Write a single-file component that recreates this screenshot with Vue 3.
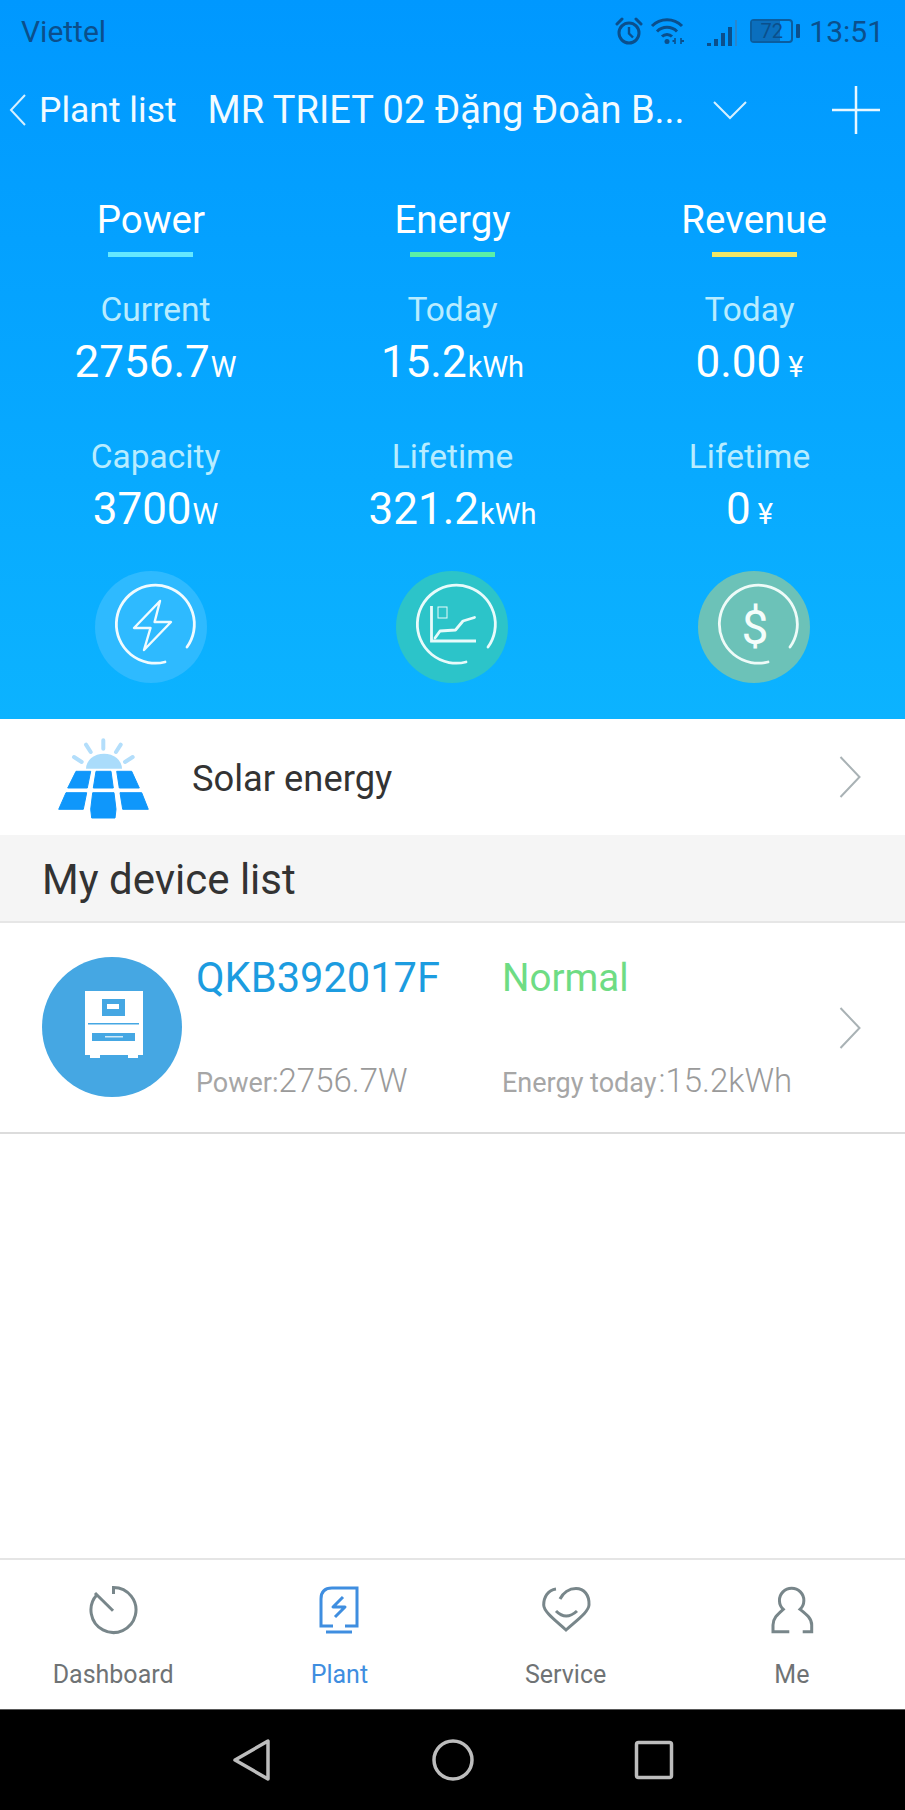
<template>
  <div class="screen">
    <section class="hero">
      <div class="status">
        <span class="carrier">Viettel</span>
        <div class="status-right">
          <svg class="ic-alarm" width="28" height="28" viewBox="0 0 28 28" fill="none" stroke="#0b4f8c" stroke-width="3">
            <circle cx="14" cy="16" r="10" />
            <path d="M14 10v6.5l4 4" stroke-width="2.4" />
            <path d="M2 7l5-5M26 7l-5-5" stroke-linecap="round" />
          </svg>
          <svg class="ic-wifi" width="36" height="30" viewBox="0 0 36 30" fill="none" stroke="#0b4f8c" stroke-width="3">
            <path d="M2 10A21 21 0 0 1 32 10" />
            <path d="M7 15.500A14 14 0 0 1 27 15.500" />
            <path d="M12 20.500A7 7 0 0 1 22 20.500" />
            <circle cx="17" cy="25.500" r="2.500" fill="#0b4f8c" stroke="none" />
            <path d="M25 22v6M31 22v6" stroke-width="1.600" />
            <path d="M22.500 25h2M31 25h3" stroke-width="2" />
          </svg>
          <div class="ic-signal">
            <i v-for="b in bars" :key="b.h" :class="{ pale: b.pale }" :style="{ height: b.h + 'px' }"></i>
          </div>
          <div class="battery">
            <div class="battery-box"><div class="battery-fill"></div><span>72</span></div>
            <div class="battery-nub"></div>
          </div>
          <span class="clock">13:51</span>
        </div>
      </div>

      <div class="topbar">
        <svg class="ic-back" width="18" height="34" viewBox="0 0 18 34" fill="none" stroke="#d6f0ff" stroke-width="2">
          <path d="M16 2L2 17l14 15" />
        </svg>
        <span class="back-label">Plant list</span>
        <span class="plant-name">MR TRIET 02 Đặng Đoàn B...</span>
        <svg class="ic-down" width="36" height="20" viewBox="0 0 36 20" fill="none" stroke="#d6f0ff" stroke-width="2">
          <path d="M2 2l16 16L34 2" />
        </svg>
        <svg class="ic-plus" width="48" height="48" viewBox="0 0 48 48" fill="none" stroke="#e8f7ff" stroke-width="2.500">
          <path d="M24 0v48M0 24h48" />
        </svg>
      </div>

      <div class="tabs">
        <div v-for="t in tabs" :key="t.label" class="tab">
          <span class="tab-label">{{ t.label }}</span>
          <i class="tab-line" :style="{ background: t.color }"></i>
        </div>
      </div>

      <div class="stats">
        <div v-for="s in stats" :key="s.id" class="stat">
          <div class="stat-label">{{ s.label }}</div>
          <div class="stat-value">{{ s.value }}<small :class="{ yen: s.unit === '¥' }">{{ s.unit }}</small></div>
        </div>
      </div>

      <div class="badges">
        <div class="badge badge-power">
          <svg width="112" height="112" viewBox="0 0 112 112" fill="none" stroke="#f0fbff" stroke-width="2.800">
            <path d="M92 76A39 39 0 1 0 70 91" stroke-linecap="round" />
            <path d="M65 30L39 57h16.500L49 79l27-28H59.600z" stroke-linejoin="round" stroke-width="2.400" />
          </svg>
        </div>
        <div class="badge badge-energy">
          <svg width="112" height="112" viewBox="0 0 112 112" fill="none" stroke="#e8fbfb" stroke-width="2.800">
            <path d="M92 76A39 39 0 1 0 70 91" stroke-linecap="round" />
            <path d="M35.500 35v35H80" />
            <path d="M39 67l5-7 15.500-1 7.500-9 11.500-3.500" stroke-linecap="round" stroke-linejoin="round" />
            <rect x="42" y="36" width="9" height="11" stroke-width="1" />
          </svg>
        </div>
        <div class="badge badge-revenue">
          <svg width="112" height="112" viewBox="0 0 112 112" fill="none" stroke="#eefbf8" stroke-width="2.800">
            <path d="M92 76A39 39 0 1 0 70 91" stroke-linecap="round" />
            <text x="57" y="73" text-anchor="middle" class="dollar">$</text>
          </svg>
        </div>
      </div>
    </section>

    <div class="solar-row">
      <svg class="ic-solar" width="100" height="90" viewBox="0 0 100 90">
        <g fill="none" stroke="#b3defb" stroke-width="4" stroke-linecap="round">
          <path d="M48.300 8.300v8.400M31 12.700l4.700 7.300M65.700 12.700L61 20M19 25l7.700 5M77.700 25L70 30" />
        </g>
        <path d="M31 36.700A18 15 0 0 1 67 36.700z" fill="#aadcfb" />
        <g fill="#0f97fb" stroke="#0f97fb" stroke-width="1" stroke-linejoin="round">
          <path d="M21 39.300h14.700L32.300 56H12.700z" />
          <path d="M41 39.300h15L58.300 56h-20z" />
          <path d="M61.700 39.300h15L84.300 56h-20z" />
          <path d="M11 60.700h20.700l-3.400 16.600H3.700z" />
          <path d="M37.700 60.700H59l2 16.600-1 8.700H36.700l-1-8.700z" />
          <path d="M65 60.700h21.700l6.600 16.600H67.700z" />
        </g>
      </svg>
      <span class="solar-label">Solar energy</span>
      <svg class="ic-chev" width="22" height="42" viewBox="0 0 22 42" fill="none" stroke="#a9b2b5" stroke-width="2">
        <path d="M1.500 1l19 20-19 20" />
      </svg>
    </div>

    <div class="section-title">My device list</div>

    <div class="device-row">
      <svg class="ic-device" width="140" height="140" viewBox="0 0 140 140">
        <circle cx="70" cy="70" r="70" fill="#45a7e3" />
        <rect x="43" y="34" width="58" height="64" fill="#fff" />
        <path d="M48 96h10v5H48zM86 96h10v5H86z" fill="#fff" />
        <rect x="60" y="42" width="23" height="17" fill="#45a7e3" />
        <rect x="65" y="47" width="12" height="5" fill="#fff" />
        <rect x="46" y="66" width="51" height="1.500" fill="#45a7e3" />
        <rect x="50" y="76" width="43" height="8" fill="#45a7e3" />
        <rect x="63" y="79" width="18" height="1.500" fill="#cfe9f8" />
      </svg>
      <div class="device-info">
        <span class="device-name">QKB392017F</span>
        <span class="device-state">Normal</span>
        <span class="device-meta"><em>Power:</em>2756.7W</span>
        <span class="device-meta"><em class="wide">Energy today</em>:15.2kWh</span>
      </div>
      <svg class="ic-chev" width="22" height="42" viewBox="0 0 22 42" fill="none" stroke="#a9b2b5" stroke-width="2">
        <path d="M1.500 1l19 20-19 20" />
      </svg>
    </div>

    <div class="spacer"></div>

    <nav class="tabbar">
      <div class="nav-item">
        <svg width="50" height="50" viewBox="0 0 50 50" fill="none" stroke="#78868a" stroke-width="3">
          <path d="M25.500 9V2.500A22.500 22.500 0 1 1 8.700 10" />
          <path d="M7 8l18 17.700" />
        </svg>
        <span>Dashboard</span>
      </div>
      <div class="nav-item active">
        <svg width="50" height="50" viewBox="-4 0 50 50" fill="none" stroke="#3f8ee0" stroke-width="3">
          <path d="M15 41H3V14Q3 3 14 3h25v38H27" />
          <path d="M8 47h26" />
          <path d="M25 12L15 22h12L17 32" stroke-linejoin="round" />
        </svg>
        <span>Plant</span>
      </div>
      <div class="nav-item">
        <svg width="50" height="50" viewBox="0 0 50 50" fill="none" stroke="#78868a" stroke-width="3">
          <path d="M15 4C7 5 2.700 12 2.700 20C3 27 14 35 25 45C36 35 47.500 27 48 20C48.500 10 43 3.500 35 3.500C28 3.500 22 8 19 14" />
          <path d="M15 26Q25 36 36 26" />
        </svg>
        <span>Service</span>
      </div>
      <div class="nav-item">
        <svg width="50" height="50" viewBox="-3 0 50 50" fill="none" stroke="#78868a" stroke-width="3">
          <path d="M19.300 46.700H3V40C3 33 8 29 13.300 24.300A12.200 12.200 0 1 1 30 24.300C36 29 41.700 33 41.700 40v6.700h-9" />
        </svg>
        <span>Me</span>
      </div>
    </nav>

    <div class="softkeys">
      <svg width="40" height="44" viewBox="0 0 40 44" fill="none" stroke="#bdbdbd" stroke-width="3.500" stroke-linejoin="round">
        <path d="M3 22L36 3v38z" />
      </svg>
      <svg width="44" height="44" viewBox="0 0 44 44" fill="none" stroke="#bdbdbd" stroke-width="3.500">
        <circle cx="22" cy="22" r="19" />
      </svg>
      <svg width="40" height="40" viewBox="0 0 40 40" fill="none" stroke="#bdbdbd" stroke-width="3.500" stroke-linejoin="round">
        <rect x="2.500" y="2.500" width="35" height="35" rx="2" />
      </svg>
    </div>
  </div>
</template>

<script setup>
const bars = [
  { h: 3 },
  { h: 7 },
  { h: 13 },
  { h: 19 },
  { h: 26, pale: true }
]

const tabs = [
  { label: 'Power', color: '#64e8ff' },
  { label: 'Energy', color: '#5cf0a6' },
  { label: 'Revenue', color: '#f2e766' }
]

const stats = [
  { id: 1, label: 'Current', value: '2756.7', unit: 'W' },
  { id: 2, label: 'Today', value: '15.2', unit: 'kWh' },
  { id: 3, label: 'Today', value: '0.00', unit: '¥' },
  { id: 4, label: 'Capacity', value: '3700', unit: 'W' },
  { id: 5, label: 'Lifetime', value: '321.2', unit: 'kWh' },
  { id: 6, label: 'Lifetime', value: '0', unit: '¥' }
]
</script>

<style scoped>
.screen {
  width: 905px;
  height: 1810px;
  display: flex;
  flex-direction: column;
  background: #fff;
  font-family: Roboto, "Noto Sans", sans-serif;
  overflow: hidden;
}

/* top blue block */
.hero {
  height: 719px;
  background: linear-gradient(180deg, #0098ff 0%, #0cb3ff 100%);
  color: #fff;
}

.status {
  height: 62px;
  display: flex;
  justify-content: space-between;
  align-items: center;
  padding: 0 21px;
  color: #0b4f8c;
  font-size: 30px;
}

.status-right {
  display: flex;
  align-items: center;
}

.ic-wifi {
  margin-left: 7px;
}

.ic-signal {
  display: flex;
  align-items: flex-end;
  gap: 3px;
  height: 26px;
  margin-left: 21px;
  margin-top: 3px;
}

.ic-signal i {
  width: 4px;
  background: #0b4f8c;
}

.ic-signal i.pale {
  background: #2a86cc;
  width: 2px;
}

.battery {
  display: flex;
  align-items: center;
  margin-left: 13px;
}

.battery-box {
  position: relative;
  width: 43px;
  height: 24px;
  box-sizing: border-box;
  border: 2px solid #0b5d9f;
  border-radius: 4px;
  display: flex;
  align-items: center;
  justify-content: center;
  color: #0b4f8c;
  font-size: 20px;
}

.battery-fill {
  position: absolute;
  left: 0;
  top: 0;
  bottom: 0;
  width: 72%;
  background: #0b6fbe;
}

.battery-box span {
  position: relative;
}

.battery-nub {
  width: 4px;
  height: 14px;
  margin-left: 3px;
  background: #0b4f8c;
  border-radius: 1px;
}

.clock {
  margin-left: 9px;
}

.topbar {
  height: 96px;
  display: flex;
  align-items: center;
  padding-left: 9px;
  font-size: 35.5px;
  color: #f2fbff;
}

.back-label {
  margin-left: 12px;
  white-space: nowrap;
}

.plant-name {
  width: 476px;
  margin-left: 31px;
  font-size: 38px;
  white-space: nowrap;
}

.ic-down {
  margin-left: 28px;
}

.ic-plus {
  margin-left: 84px;
}

.tabs {
  display: grid;
  grid-template-columns: repeat(3, 1fr);
  margin-top: 40px;
}

.tab {
  display: flex;
  flex-direction: column;
  align-items: center;
}

.tab-label {
  font-size: 38.5px;
  line-height: 44px;
}

.tab-line {
  width: 85px;
  height: 5px;
  margin-top: 10px;
}

.stats {
  display: grid;
  grid-template-columns: repeat(3, 1fr);
  grid-auto-rows: 147px;
  padding: 0 7px;
  margin-top: 31px;
}

.stat {
  text-align: center;
}

.stat-label {
  font-size: 33.5px;
  line-height: 44px;
  color: #b8ecff;
}

.stat-value {
  font-size: 44px;
  line-height: 56px;
  margin-top: 2px;
}

.stat-value small {
  font-size: 29px;
  margin-left: 1px;
}

.stat-value small.yen {
  margin-left: 7px;
  font-size: 29px;
}

.badges {
  display: grid;
  grid-template-columns: repeat(3, 1fr);
  justify-items: center;
  margin-top: -11px;
}

.badge {
  width: 112px;
  height: 112px;
  border-radius: 50%;
}

.badge svg {
  display: block;
}

.badge-power {
  background: #2ebaff;
}

.badge-energy {
  background: #2cc4c9;
}

.badge-revenue {
  background: #6cc2b8;
}

.dollar {
  font-family: Roboto, sans-serif;
  font-size: 48px;
  fill: #f4fdfb;
  stroke: none;
}

.solar-row {
  height: 116px;
  display: flex;
  align-items: center;
  padding-left: 55px;
  flex-shrink: 0;
}

.solar-label {
  margin-left: 37px;
  padding-top: 2px;
  font-size: 36.3px;
  color: #333;
}

.ic-chev {
  margin-left: auto;
  margin-right: 44px;
  flex-shrink: 0;
}

.section-title {
  height: 86px;
  line-height: 90px;
  padding-left: 42px;
  background: #f5f5f5;
  border-bottom: 2px solid #e6e6e6;
  box-sizing: content-box;
  font-size: 42px;
  color: #333;
}

.device-row {
  height: 209px;
  display: flex;
  align-items: center;
  padding-left: 42px;
  border-bottom: 2px solid #dcdcdc;
  flex-shrink: 0;
}

.ic-device {
  flex-shrink: 0;
  margin-bottom: 2px;
}

.device-info {
  display: grid;
  grid-template-columns: 306px auto;
  grid-template-rows: 56px 46px;
  row-gap: 52px;
  align-items: center;
  align-self: flex-start;
  margin-top: 26px;
  margin-left: 14px;
}

.device-name {
  font-size: 41.6px;
  color: #1c9ce0;
}

.device-state {
  font-size: 38.5px;
  color: #6edc84;
}

.device-meta {
  font-size: 33px;
  font-weight: 300;
  color: #9a9a9a;
  white-space: nowrap;
}

.device-meta em {
  font-style: normal;
  font-weight: 400;
  font-size: 27px;
  color: #a6a6a6;
}

.device-meta em.wide {
  margin-right: 2px;
}

.spacer {
  flex: 1;
}

.tabbar {
  height: 149px;
  display: grid;
  grid-template-columns: repeat(4, 1fr);
  border-top: 2px solid #e5e5e5;
  flex-shrink: 0;
}

.nav-item {
  display: flex;
  flex-direction: column;
  align-items: center;
  padding-top: 25px;
  font-size: 25px;
  color: #6f7375;
}

.nav-item span {
  margin-top: 25px;
}

.nav-item.active {
  color: #3f8ee0;
}

.softkeys {
  height: 101px;
  background: #000;
  display: grid;
  grid-template-columns: repeat(3, 201px);
  justify-content: center;
  justify-items: center;
  align-items: center;
  border-top: 1px solid #5a5a5a;
  box-sizing: border-box;
  flex-shrink: 0;
}
</style>
